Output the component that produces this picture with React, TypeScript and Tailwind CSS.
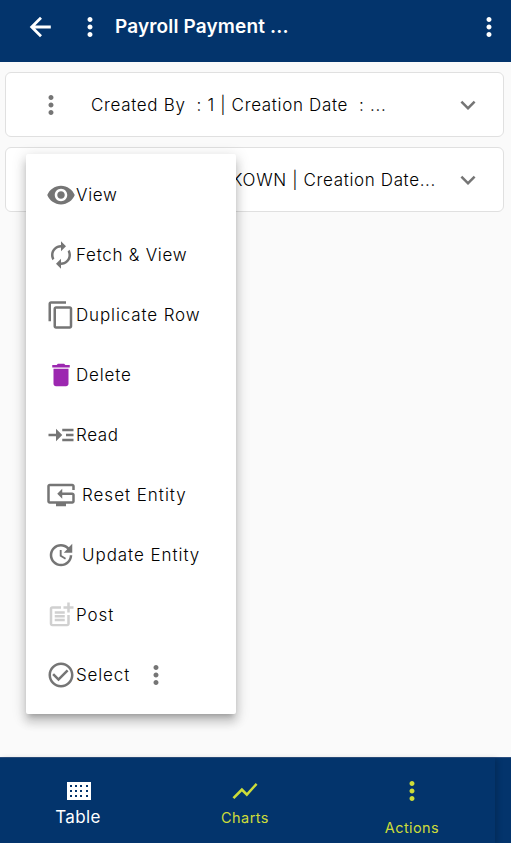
import React from "react";
import {
  MdMoreVert,
  MdExpandMore,
  MdVisibility,
  MdAutorenew,
  MdContentCopy,
  MdDelete,
  MdReadMore,
  MdResetTv,
  MdUpdate,
  MdPostAdd,
  MdCheckCircleOutline,
  MdShowChart,
} from "react-icons/md";

const menuItems = [
  { label: "View", Icon: MdVisibility, color: "text-[#757575]", text: "tracking-[0.7px]" },
  { label: "Fetch & View", Icon: MdAutorenew, color: "text-[#757575]", text: "tracking-[0.73px]" },
  { label: "Duplicate Row", Icon: MdContentCopy, color: "text-[#757575]", text: "tracking-[0.87px]" },
  { label: "Delete", Icon: MdDelete, color: "text-[#9c27b0]", text: "tracking-[0.85px]" },
  { label: "Read", Icon: MdReadMore, color: "text-[#757575]", text: "tracking-[0.6px]" },
  { label: "Reset Entity", Icon: MdResetTv, color: "text-[#757575]", text: "ml-1.5 tracking-[0.98px]" },
  { label: "Update Entity", Icon: MdUpdate, color: "text-[#757575]", text: "ml-1.5 tracking-[0.95px]" },
  { label: "Post", Icon: MdPostAdd, color: "text-[#d0d0d0]", text: "tracking-[0.95px]" },
  { label: "Select", Icon: MdCheckCircleOutline, color: "text-[#757575]", text: "tracking-[0.85px]", more: true },
];

function BackArrow() {
  return (
    <svg width="22" height="22" viewBox="0 0 22 22" fill="none" stroke="white" strokeWidth="2.8">
      <path d="M21.8 11H3M12 1.7 2.7 11l9.3 9.3" />
    </svg>
  );
}

function TableIcon() {
  return (
    <svg width="24" height="18" viewBox="0 0 24 18" shapeRendering="crispEdges">
      <path fill="white" d="M0 0h24v18H0z" />
      {[3, 8, 13, 19].map((x) =>
        [3, 8, 13].map((y) => <rect key={`${x}-${y}`} x={x} y={y} width="2" height="2" fill="#03346c" />),
      )}
    </svg>
  );
}

export default function App() {
  return (
    <div className="relative flex h-[843px] w-[511px] flex-col overflow-hidden bg-[#fafafa] font-['Inter',sans-serif] text-black">
      <header className="flex h-[62px] shrink-0 items-center bg-[#03346c] pb-2 pl-[29px] text-white">
        <BackArrow />
        <MdMoreVert size={30} className="ml-6" />
        <h1 className="ml-[10px] pt-px text-[19px] font-semibold tracking-[0.15px] whitespace-pre">Payroll Payment ...</h1>
        <MdMoreVert size={30} className="mr-[7px] ml-auto" />
      </header>

      <main className="flex flex-1 flex-col gap-[10px] py-[10px] pr-[7px] pl-[5px]">
        <section className="flex h-[65px] items-center rounded-[6px] border border-[#e0e0e0] bg-white pr-5 pl-[30px]">
          <MdMoreVert size={30} className="text-[#757575]" />
          <span className="ml-[25px] pt-0.5 text-[17px] font-light tracking-[0.67px] whitespace-pre">{"Created By  : 1 | Creation Date  : ..."}</span>
          <MdExpandMore size={30} className="ml-auto text-[#757575]" />
        </section>
        <section className="flex h-[65px] items-center rounded-[6px] border border-[#e0e0e0] bg-white pr-5 pl-[30px]">
          <MdMoreVert size={30} className="text-[#757575]" />
          <span className="ml-auto pt-0.5 text-[17px] font-light tracking-[0.64px] whitespace-pre">UNKOWN | Creation Date...</span>
          <MdExpandMore size={30} className="ml-[17px] text-[#757575]" />
        </section>
      </main>

      <div className="absolute top-[154px] left-[26px] flex h-[560px] w-[210px] flex-col rounded-[2px] bg-white py-[11px] pl-5 shadow-[0_5px_5px_-3px_rgba(0,0,0,0.2),0_8px_10px_1px_rgba(0,0,0,0.14),0_3px_14px_2px_rgba(0,0,0,0.12)]">
        {menuItems.map(({ label, Icon, color, text, more }) => (
          <div key={label} className="flex h-[60px] shrink-0 items-center">
            <Icon size={30} className={color} />
            <span className={`pt-0.5 text-[17px] font-light whitespace-pre ${text}`}>{label}</span>
            {more && <MdMoreVert size={30} className="ml-[11px] text-[#757575]" />}
          </div>
        ))}
      </div>

      <nav className="flex h-[86px] shrink-0 border-t border-[#2b4f80] bg-[#03346c] text-[#cddc39]">
        <div className="flex w-[495px] shadow-[2px_1px_6px_rgba(0,0,0,0.2)]">
          <div className="flex w-[156px] flex-col items-center pt-6 text-white">
            <div className="pl-0.5">
              <TableIcon />
            </div>
            <span className="mt-[3px] text-[17px] leading-7 tracking-[0.4px]">Table</span>
          </div>
          <div className="flex w-[178px] flex-col items-center pt-[18px]">
            <MdShowChart size={30} />
            <span className="text-[14.5px] leading-6 tracking-[0.45px]">Charts</span>
          </div>
          <div className="flex w-[156px] flex-col items-center pt-[18px]">
            <MdMoreVert size={30} />
            <span className="mt-[10px] text-[14.5px] leading-6 tracking-[0.4px]">Actions</span>
          </div>
        </div>
      </nav>
    </div>
  );
}
